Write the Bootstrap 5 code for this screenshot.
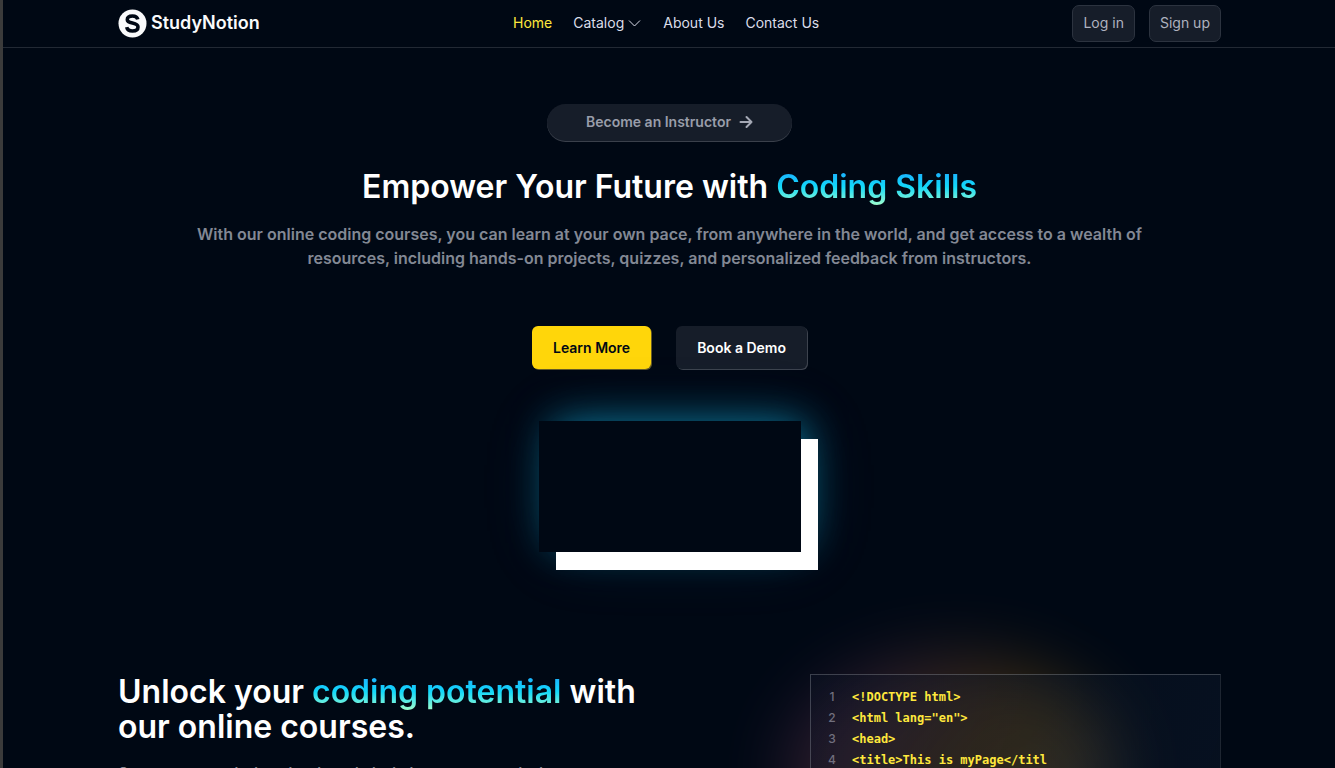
<!DOCTYPE html>
<html lang="en">
<head>
<meta charset="utf-8">
<meta name="viewport" content="width=device-width, initial-scale=1">
<title>StudyNotion</title>
<link href="https://cdn.jsdelivr.net/npm/bootstrap@5.3.0/dist/css/bootstrap.min.css" rel="stylesheet">
<style>
  :root { --ink: #000814; --panel: #161d29; --line: #2c333f; --muted: #838894; --soft: #999daa; }
  html { background: var(--ink); scrollbar-width: none; }
  body { background: var(--ink); color: #fff; font-family: Inter, sans-serif; font-size: 14px; line-height: 21px; border-left: 3px solid #3b3b3b; min-height: 100vh; }
  .page-wrap { width: 100%; max-width: 1104px; margin-inline: auto; padding-left: 1px; }
  .topbar { height: 48px; border-bottom: 1px solid #222934; }
  .brand-name { font-size: 18px; font-weight: 600; line-height: 24px; color: #f9fafb; padding-bottom: 2px; }
  .menu-list { gap: 21px; padding-bottom: 2px; }
  .menu-list a, .menu-list button { color: #dbddea; text-decoration: none; font-size: 14px; line-height: 21px; }
  .menu-list a.current { color: #ffe83d; }
  .menu-list svg { margin-right: 1px; }
  .auth { gap: 14px; }
  .auth-btn { background: var(--panel); border: 1px solid var(--line); border-radius: 7px; color: #afb2bf; font-size: 14px; line-height: 21px; padding: 6px 10px 8px; text-decoration: none; }
  .hero { padding-top: 56px; }
  .pill { background: var(--panel); color: var(--soft); font-weight: 600; border-radius: 50px; padding: 7px 39px 9px; box-shadow: 0 1px 0 #3a404b; text-decoration: none; height: 37px; }
  .title { font-size: 32px; line-height: 35px; font-weight: 600; }
  .hero .title { margin-top: 28px; }
  .glow-text { background: linear-gradient(180deg, #1fa2ff, #12d8fa 50%, #a6ffcb); -webkit-background-clip: text; background-clip: text; color: transparent; }
  .lede { color: var(--muted); font-size: 16px; font-weight: 600; line-height: 24px; margin-top: 18px; max-width: 992px; }
  .cta { gap: 25px; margin-top: 56px; }
  .cta a { font-weight: 600; font-size: 14px; line-height: 21px; padding: 11px 21px; border-radius: 6px; text-decoration: none; }
  .cta-yellow { background: #ffd60a; color: #000814; box-shadow: 1px 1px 0 #665c26; }
  .cta-dark { background: var(--panel); color: #fff; box-shadow: 1px 1px 0 #3d434e; }
  .clip { width: 262px; height: 131px; margin-top: 52px; background: var(--ink); box-shadow: 17px 18px 0 #fff, 9px -3px 40px -6px rgba(17,138,178,.85), 9px 0 70px -10px rgba(17,138,178,.3); }
  .unlock { margin-top: 122px; }
  .copy { width: 50%; }
  .copy p { color: var(--muted); font-size: 14px; line-height: 21px; font-weight: 600; margin: 18px 0 0; width: 85%; }
  .code-col { width: 411px; position: relative; }
  .halo { position: absolute; left: -24px; top: -18px; width: 330px; height: 230px; border-radius: 50%; background: linear-gradient(123deg, #8a2be2 -7%, #ffa500 59%, #f8f8ff 118%); opacity: .23; filter: blur(34px); }
  .code-box { position: relative; border: 1px solid rgba(255,255,255,.2); border-right-color: rgba(255,255,255,.1); background: linear-gradient(111deg, rgba(14,26,45,.24), rgba(17,30,50,.38)); padding: 11px 16px; font-size: 12px; line-height: 21px; }
  .nums { width: 10px; color: #716f7e; font-weight: 500; text-align: center; }
  .src { font-family: "DejaVu Sans Mono", monospace; font-size: 12px; line-height: 21px; font-weight: 700; color: #ffe83d; margin: 0 0 0 15px; padding-top: 1px; overflow: hidden; }
</style>
</head>
<body>
<header class="topbar">
  <nav class="page-wrap h-100 d-flex align-items-center justify-content-between" aria-label="Main">
    <a href="#" class="d-flex align-items-center text-decoration-none gap-1">
      <svg width="29" height="29" viewBox="0 0 29 29" aria-hidden="true"><circle cx="14.500" cy="14.500" r="14" fill="#f9fafb"/><path d="M19.800 10.400C19.200 8 17.300 7 14.500 7C11.500 7 9.300 8.300 9.300 10.700C9.300 15.500 20 12.600 20 18C20 20.700 17.600 22 14.500 22C11.300 22 9.200 20.600 8.700 18.200" fill="none" stroke="#000814" stroke-width="3.600"/></svg>
      <span class="brand-name">StudyNotion</span>
    </a>
    <ul class="menu-list list-unstyled d-flex align-items-center mb-0">
      <li><a href="#" class="current" aria-current="page">Home</a></li>
      <li><button type="button" class="border-0 bg-transparent p-0 d-flex align-items-center gap-1">Catalog
        <svg width="13" height="12" viewBox="0 0 13 12" fill="none" stroke="#dbddea" aria-hidden="true"><path d="M1 3.500L6.500 9L12 3.500"/></svg></button></li>
      <li><a href="#">About Us</a></li>
      <li><a href="#">Contact Us</a></li>
    </ul>
    <div class="auth d-flex">
      <a href="#" class="auth-btn">Log in</a>
      <a href="#" class="auth-btn">Sign up</a>
    </div>
  </nav>
</header>
<main class="page-wrap">
  <section class="hero d-flex flex-column align-items-center text-center">
    <a href="#" class="pill d-flex align-items-center gap-2">Become an Instructor
      <svg width="14" height="14" viewBox="0 0 14 14" fill="none" stroke="#a5a9b5" stroke-width="2" stroke-linecap="round" stroke-linejoin="round" aria-hidden="true"><path d="M1.500 7H12.500M7.500 2L12.500 7L7.500 12"/></svg></a>
    <h1 class="title mb-0">Empower Your Future with <span class="glow-text">Coding Skills</span></h1>
    <p class="lede mb-0">With our online coding courses, you can learn at your own pace, from anywhere in the world, and get access to a wealth of resources, including hands-on projects, quizzes, and personalized feedback from instructors.</p>
    <div class="cta d-flex">
      <a href="#" class="cta-yellow">Learn More</a>
      <a href="#" class="cta-dark">Book a Demo</a>
    </div>
    <div class="clip"></div>
  </section>
  <section class="unlock d-flex justify-content-between align-items-start">
    <div class="copy">
      <h2 class="title mb-0">Unlock your <span class="glow-text">coding potential</span> with our online courses.</h2>
      <p>Our courses are designed and taught by industry experts who have years of experience in coding and are passionate about sharing their knowledge with you.</p>
    </div>
    <div class="code-col">
      <div class="halo"></div>
      <div class="code-box d-flex">
        <div class="nums">1<br>2<br>3<br>4</div>
        <pre class="src">&lt;!DOCTYPE html&gt;
&lt;html lang="en"&gt;
&lt;head&gt;
&lt;title&gt;This is myPage&lt;/titl
</pre>
      </div>
    </div>
  </section>
</main>
<script src="https://cdn.jsdelivr.net/npm/bootstrap@5.3.0/dist/js/bootstrap.bundle.min.js"></script>
</body>
</html>
